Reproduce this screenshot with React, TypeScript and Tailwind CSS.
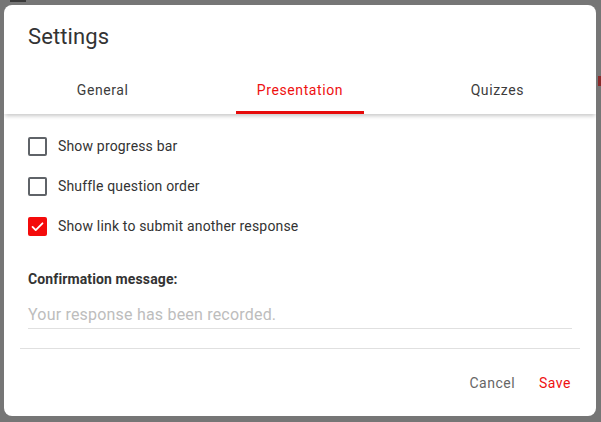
import React from "react";

const tabs = ["General", "Presentation", "Quizzes"];

const options = [
  { label: "Show progress bar", checked: false },
  { label: "Shuffle question order", checked: false },
  { label: "Show link to submit another response", checked: true },
];

const Checkbox = ({ checked }: { checked: boolean }) =>
  checked ? (
    <span className="flex h-[19px] w-[19px] items-center justify-center rounded-[2px] bg-[#f40b0b]">
      <svg viewBox="0 0 24 24" className="h-[17px] w-[17px]" fill="none">
        <path d="M5 12.5l4.5 4.5L19 7.5" stroke="#fff" strokeWidth="2.6" strokeLinecap="round" strokeLinejoin="round" />
      </svg>
    </span>
  ) : (
    <span className="h-[19px] w-[19px] rounded-[2px] border-2 border-[#5f6368]" />
  );

export default function App() {
  return (
    <div
      className="relative h-[422px] w-[601px] overflow-hidden bg-[#767676] pl-[4px] pt-[5px]"
      style={{ fontFamily: "Roboto, 'Liberation Sans', sans-serif" }}
    >
      {/* bits of the page behind the backdrop */}
      <div className="absolute left-[10px] top-0 h-[2px] w-[16px] bg-[#3a3a3a]" />
      <div className="absolute right-0 top-[76px] h-[10px] w-[3px] bg-[#8a2a2a]" />

      <div className="flex h-[411px] w-[592px] flex-col overflow-hidden rounded-[8px] bg-white">
        <div className="relative z-10 shadow-[0_3px_4px_-1px_rgba(0,0,0,0.22)]">
          <h1 className="pl-[24px] pt-[18px] text-[22px] leading-[28px] tracking-[0.1px] text-[#333]">Settings</h1>
          <div className="mt-[15px] grid grid-cols-3">
            {tabs.map((t) => {
              const active = t === "Presentation";
              return (
                <div key={t} className="relative flex h-[48px] items-center justify-center">
                  <span
                    className={
                      active
                        ? "text-[14px] tracking-[0.6px] text-[#ee1111]"
                        : "text-[14px] tracking-[0.6px] text-[#3c3c3c]"
                    }
                  >
                    {t}
                  </span>
                  {active && (
                    <span className="absolute bottom-0 left-1/2 h-[3px] w-[128px] -translate-x-1/2 bg-[#e60b0b]" />
                  )}
                </div>
              );
            })}
          </div>
        </div>

        <div className="flex flex-1 flex-col pt-[12px]">
          <div className="px-[24px]">
            {options.map((o) => (
              <div key={o.label} className="flex h-10 items-center gap-[11px]">
                <Checkbox checked={o.checked} />
                <span className="text-[14px] tracking-[0.17px] text-[#333]">{o.label}</span>
              </div>
            ))}
            <div className="mt-[23px] text-[14px] font-bold leading-5 tracking-[0.12px] text-[#333]">
              Confirmation message:
            </div>
            <div className="mt-[14px] border-b border-[#e0e0e0] pb-[1px] text-[16px] leading-[24px] tracking-[0.2px] text-[#bdbdbd]">
              Your response has been recorded.
            </div>
          </div>
          <div className="mx-[16px] mt-[19px] border-t border-[#e0e0e0]" />
          <div className="flex justify-end gap-[24px] pr-[25px] pt-[24px]">
            <span className="text-[14px] tracking-[0.5px] text-[#666]">Cancel</span>
            <span className="text-[14px] tracking-[0.5px] text-[#ee1111]">Save</span>
          </div>
        </div>
      </div>
    </div>
  );
}
